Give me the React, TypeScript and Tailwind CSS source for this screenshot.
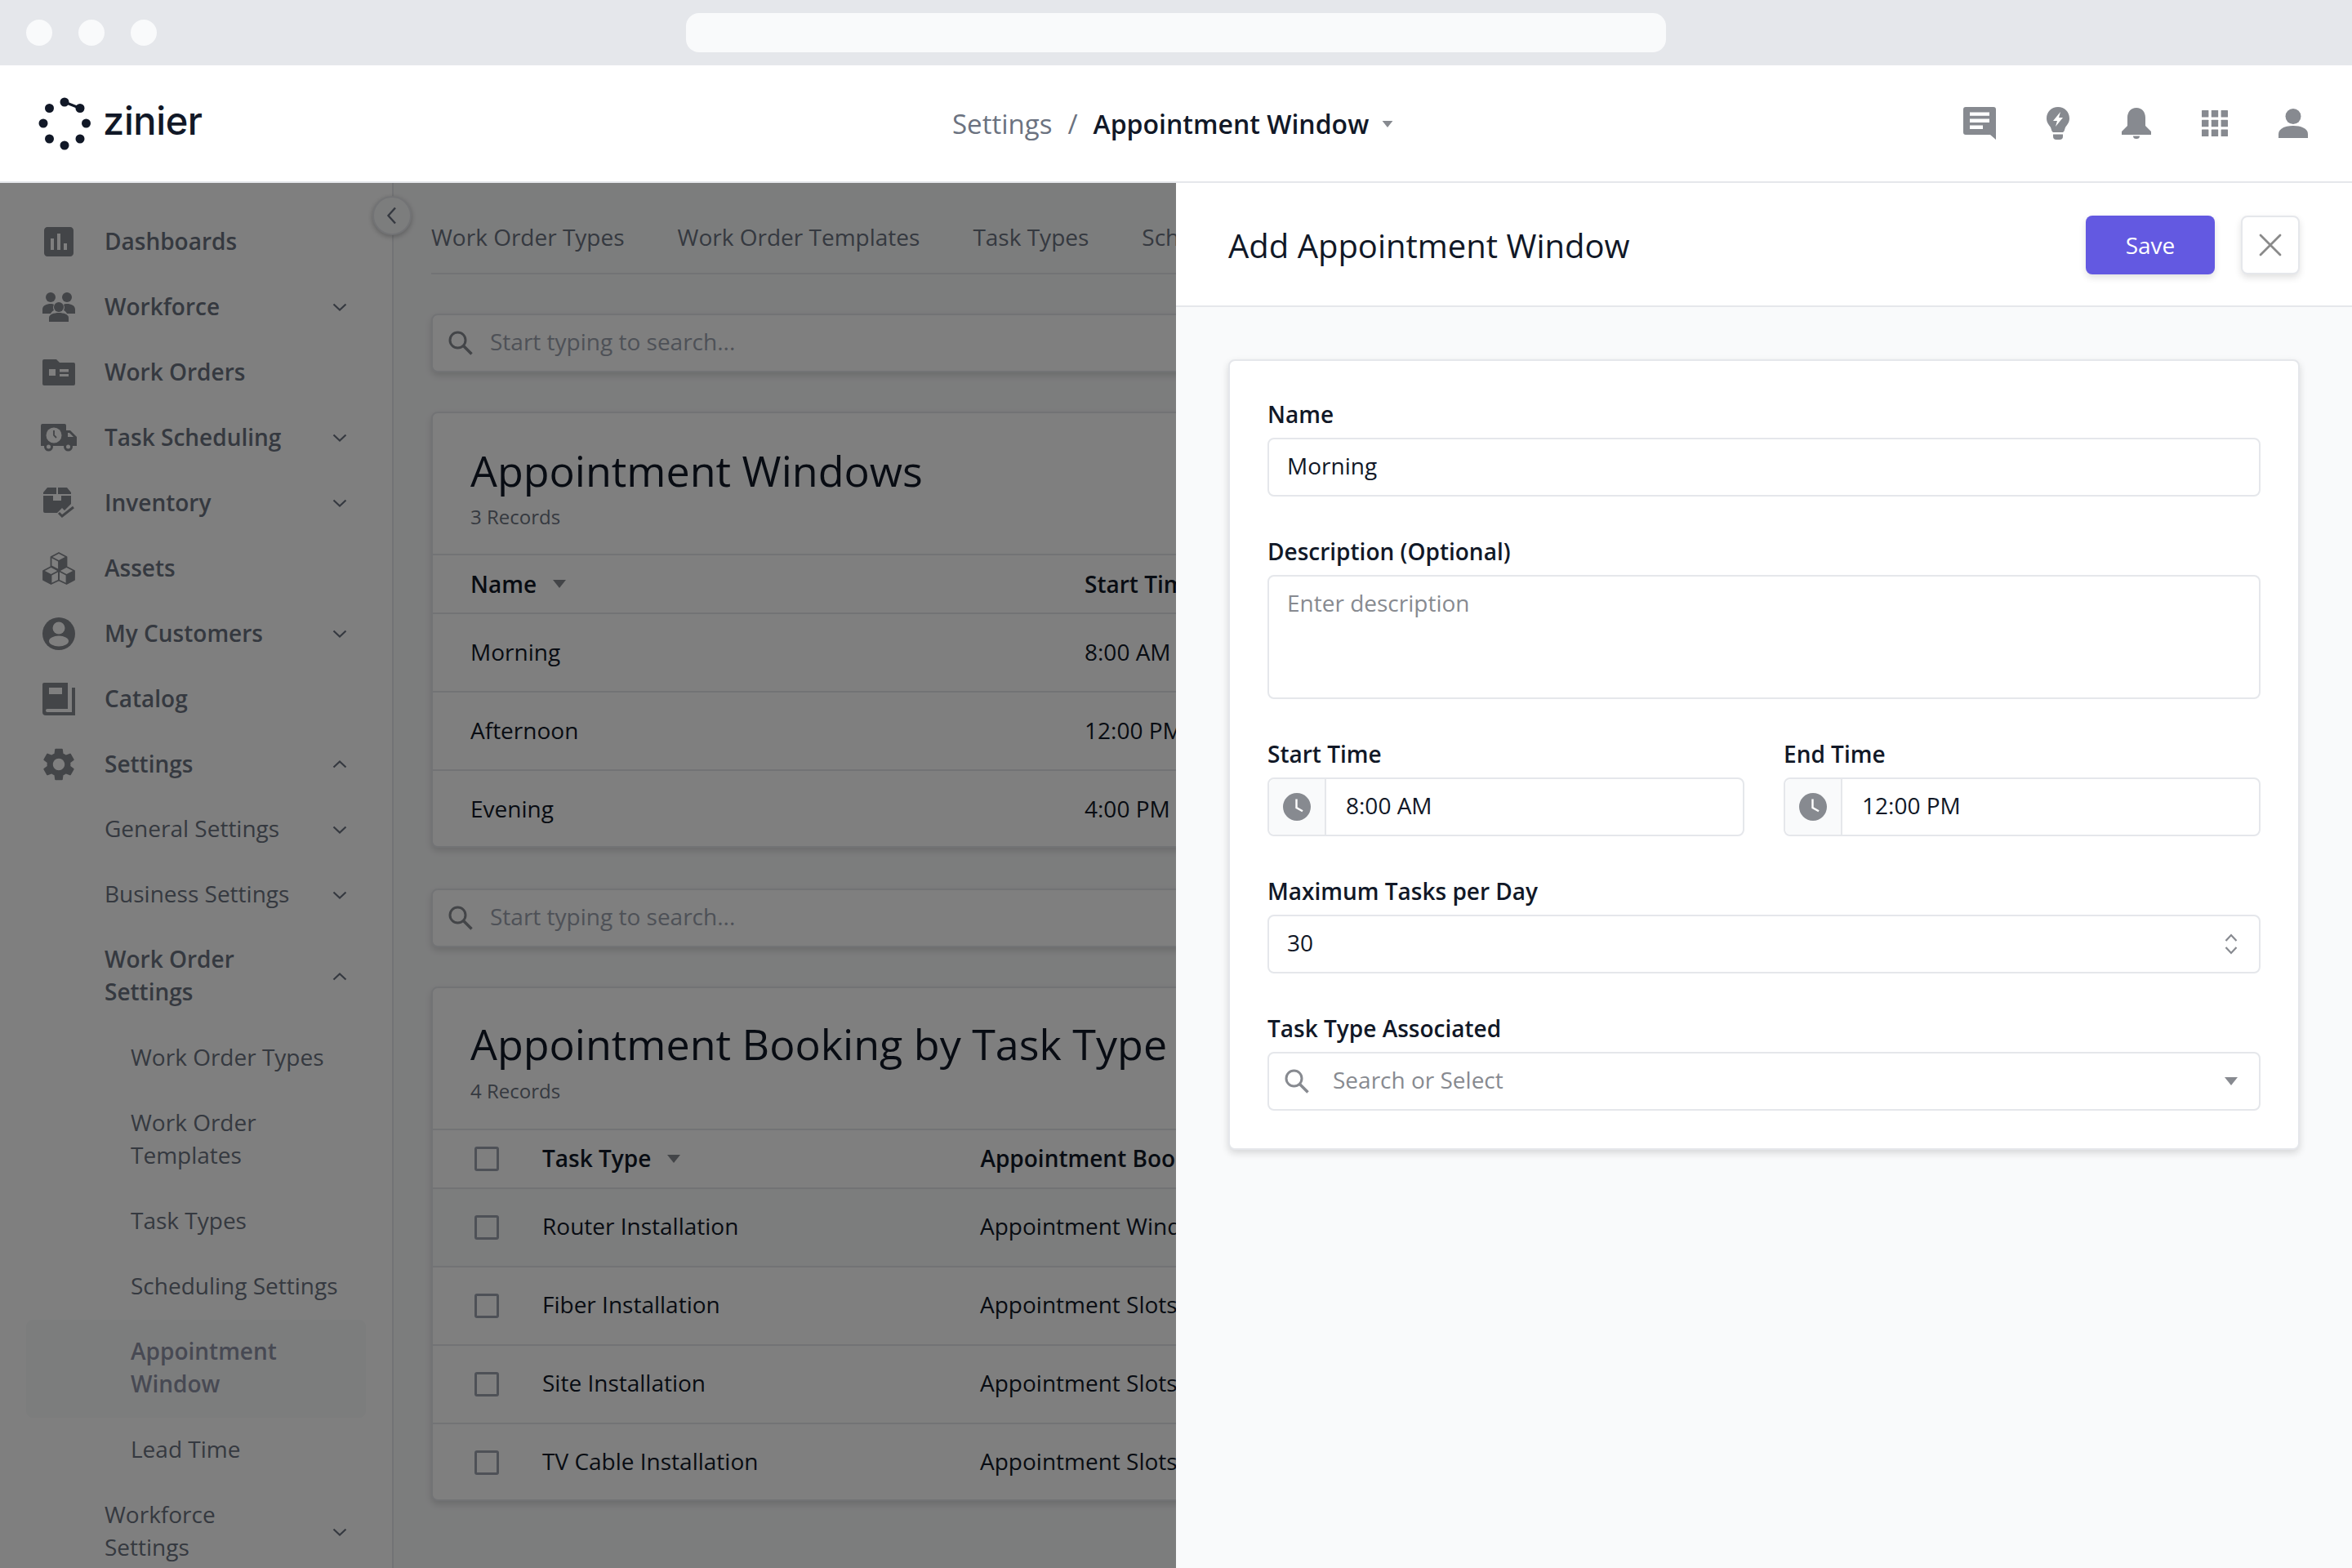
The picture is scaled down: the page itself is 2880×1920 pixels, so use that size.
import React from "react";
import { MdInsertChart, MdSettings } from "react-icons/md";

const Chevron = ({ up }: { up?: boolean }) => (
  <svg width="24" height="24" viewBox="0 0 24 24" fill="none" className="shrink-0">
    <path d={up ? "M4.500 15.500 12 8.500l7.500 7" : "M4.500 8.500 12 15.500l7.500-7"} stroke="#6b7280" strokeWidth="2.200" />
  </svg>
);

const Caret = ({ small }: { small?: boolean }) => (
  <svg width={small ? 14 : 16} height={small ? 8 : 10} viewBox="0 0 16 10" className="shrink-0">
    <path d="M0 0h16L8 10z" fill="#878a90" />
  </svg>
);

const SearchIcon = () => (
  <svg width="32" height="32" viewBox="0 0 32 32" fill="none" className="shrink-0">
    <circle cx="12.500" cy="12.500" r="9.500" stroke="#878a90" strokeWidth="3" />
    <path d="m19.500 19.500 10 10" stroke="#878a90" strokeWidth="3.600" />
  </svg>
);

const Groups = () => (
  <svg width="40" height="36" viewBox="0 0 40 36">
    <g fill="#878a90">
      <circle cx="10" cy="6" r="6" />
      <circle cx="30" cy="6" r="6" />
      <path d="M0 26v-5c0-5 5-7 10-7 2 0 3 .4 4 1-1.500 3-1 5 0 7-2 1-3 2-4 4z" />
      <path d="M40 26v-5c0-5-5-7-10-7-2 0-3 .4-4 1 1.500 3 1 5 0 7 2 1 3 2 4 4z" />
      <circle cx="20" cy="18" r="6" />
      <path d="M8 36v-5c0-4 6-6 12-6s12 2 12 6v5z" />
    </g>
  </svg>
);

const Folder = () => (
  <svg width="40" height="32" viewBox="0 0 40 32">
    <path d="M2 0h15l4 4h17a2 2 0 0 1 2 2v24a2 2 0 0 1-2 2H2a2 2 0 0 1-2-2V2a2 2 0 0 1 2-2z" fill="#878a90" />
    <path d="M8 12h8v8H8zM21 12h11v3.500H21zM21 18h11v3H21z" fill="#fff" />
  </svg>
);

const Truck = () => (
  <svg width="44" height="34" viewBox="0 0 44 34">
    <path d="M2 0h27a2 2 0 0 1 2 2v6h5l8 8v11H0V2a2 2 0 0 1 2-2z" fill="#878a90" />
    <path d="M33 11h2l5 5h-7z" fill="#fff" />
    <circle cx="16" cy="14" r="9.500" fill="#fff" />
    <path d="M16 8v6l3 3" fill="none" stroke="#878a90" strokeWidth="1.800" />
    <circle cx="9.500" cy="28" r="5.500" fill="#878a90" />
    <circle cx="9.500" cy="28" r="2.500" fill="#fff" />
    <circle cx="33.500" cy="28" r="5.500" fill="#878a90" />
    <circle cx="33.500" cy="28" r="2.500" fill="#fff" />
  </svg>
);

const Inventory = () => (
  <svg width="38" height="38" viewBox="0 0 38 38">
    <path d="M5 0h11v8H0V6zM18 0h11l5 6v2H18zM0 10h12v6h10v-6h12v10l-8 8-3-3-6 6H2a2 2 0 0 1-2-2z" fill="#878a90" />
    <path d="m19 31 4 4 14-11" fill="none" stroke="#878a90" strokeWidth="3" />
  </svg>
);

const Cubes = () => (
  <svg width="40" height="40" viewBox="0 0 40 40" fill="none" stroke="#878a90" strokeWidth="1.800" strokeLinejoin="round">
    <path d="M20 1l9.500 5v11L20 22l-9.500-5V6z" />
    <path d="M10.500 6 20 11l9.500-5M20 11v11" />
    <path d="M10.500 18 20 23v11.500L10.500 39 1 34V23z" />
    <path d="M1 23l9.500 5L20 23M10.500 28v11" />
    <path d="M29.500 18 39 23v11l-9.500 5L20 34.500V23z" />
    <path d="M20 23l9.500 5L39 23M29.500 28v11" />
    <path d="M20 11v11l9.500-5V6zM10.500 28v11L1 34V23zM29.500 28v11l9.500-5V23z" fill="#878a90" stroke="none" />
  </svg>
);

const Customer = () => (
  <svg width="40" height="40" viewBox="0 0 40 40">
    <circle cx="20" cy="20" r="20" fill="#878a90" />
    <circle cx="20" cy="13" r="7.500" fill="#fff" />
    <ellipse cx="20" cy="29" rx="12" ry="6.500" fill="#fff" />
  </svg>
);

const Book = () => (
  <svg width="40" height="40" viewBox="0 0 40 40">
    <path d="M2 0h29v32H6a2 2 0 0 0-2 2 2 2 0 0 0 2 2h30V6h4v34H4a4 4 0 0 1-4-4V2a2 2 0 0 1 2-2z" fill="#878a90" />
    <path d="M8 6h16v8H8z" fill="#fff" />
  </svg>
);

const Bulb = () => (
  <svg width="28" height="40" viewBox="0 0 28 40">
    <path d="M14 0c8 0 14 6 14 14 0 5-3 8-5 11-1 2-1 5-3 6H8c-2-1-2-4-3-6C3 22 0 19 0 14 0 6 6 0 14 0z" fill="#878a90" />
    <path d="M8 33.500h12V36a4 4 0 0 1-4 4h-4a4 4 0 0 1-4-4z" fill="#878a90" />
    <path d="M17 6 8 17h5l-2 7 9-11h-5z" fill="#fff" />
  </svg>
);

const Comment = () => (
  <svg width="40" height="40" viewBox="0 0 40 40">
    <path d="M3 0h34a3 3 0 0 1 3 3v37l-7-6H3a3 3 0 0 1-3-3V3a3 3 0 0 1 3-3z" fill="#878a90" />
    <path d="M8 6.500h24v4.300H8zM8 14.500h24v4.500H8zM8 22.500h16v4.500H8z" fill="#fff" />
  </svg>
);

const Bell = () => (
  <svg width="36" height="38" viewBox="0 0 36 38">
    <path d="M18 0c7 0 11 5.500 11 12v10l7 7v4H0v-4l7-7V12C7 5.500 11 0 18 0z" fill="#878a90" />
    <path d="M14 34.500h8a4 3.500 0 0 1-8 0z" fill="#878a90" />
  </svg>
);

const Apps = () => (
  <svg width="32" height="32" viewBox="0 0 32 32" fill="#878a90">
    {[0, 11.8, 23.6].map((y) =>
      [0, 11.8, 23.6].map((x) => <rect key={`${x}-${y}`} x={x} y={y} width="8.400" height="8.400" rx="0.500" />)
    )}
  </svg>
);

const Person = () => (
  <svg width="36" height="36" viewBox="0 0 36 36" fill="#878a90">
    <circle cx="18" cy="9.500" r="9.500" />
    <path d="M0 36v-5c0-7 9-10 18-10s18 3 18 10v5z" />
  </svg>
);

const Clock = () => (
  <svg width="34" height="34" viewBox="0 0 34 34">
    <circle cx="17" cy="17" r="17" fill="#878a90" />
    <path d="M16.500 7.500v10.500l7.500 4.200" fill="none" stroke="#fff" strokeWidth="2.400" />
  </svg>
);

const Logo = () => (
  <div className="flex items-center">
    <svg width="66" height="66" viewBox="0 0 66 66" className="shrink-0">
      <g fill="#111827">
        <circle cx="7" cy="33" r="5.500" />
        <circle cx="14.500" cy="14.500" r="5.500" />
        <circle cx="33" cy="7" r="5.500" />
        <circle cx="52" cy="14.500" r="5.500" />
        <circle cx="59.500" cy="33" r="5.500" />
        <circle cx="52" cy="52" r="5.500" />
        <circle cx="33" cy="60" r="5.500" />
        <circle cx="14.500" cy="52" r="5.500" />
      </g>
      <path d="M33 7 52 14.500" stroke="#111827" strokeWidth="3" />
    </svg>
    <span className="ml-[14px] text-[47px] leading-[66px] text-[#111827] font-['Inter',sans-serif] font-medium tracking-[-0.4px] -translate-y-[3px]">zinier</span>
  </div>
);

type Item = { label: string; icon?: React.ReactNode; level: 0 | 1 | 2; chev?: "up" | "down"; active?: boolean; lines?: [string, string] };

const items: Item[] = [
  { label: "Dashboards", icon: <MdInsertChart size={48} color="#878a90" />, level: 0 },
  { label: "Workforce", icon: <Groups />, level: 0, chev: "down" },
  { label: "Work Orders", icon: <Folder />, level: 0 },
  { label: "Task Scheduling", icon: <Truck />, level: 0, chev: "down" },
  { label: "Inventory", icon: <Inventory />, level: 0, chev: "down" },
  { label: "Assets", icon: <Cubes />, level: 0 },
  { label: "My Customers", icon: <Customer />, level: 0, chev: "down" },
  { label: "Catalog", icon: <Book />, level: 0 },
  { label: "Settings", icon: <MdSettings size={48} color="#878a90" />, level: 0, chev: "up" },
  { label: "General Settings", level: 1, chev: "down" },
  { label: "Business Settings", level: 1, chev: "down" },
  { label: "Work Order Settings", level: 1, chev: "up" },
  { label: "Work Order Types", level: 2 },
  { label: "Work Order Templates", level: 2, lines: ["Work Order", "Templates"] },
  { label: "Task Types", level: 2 },
  { label: "Scheduling Settings", level: 2 },
  { label: "Appointment Window", level: 2, active: true, lines: ["Appointment", "Window"] },
  { label: "Lead Time", level: 2 },
  { label: "Workforce Settings", level: 1, chev: "down" },
];

const NavRow = ({ item }: { item: Item }) => (
  <div className={`ml-8 w-[416px] flex items-center py-5 rounded-lg ${item.active ? "bg-[#f9fafb]" : ""}`}>
    {item.level === 0 && (
      <>
        <div className="w-[80px] h-10 flex items-center justify-center shrink-0">{item.icon}</div>
        <span className="ml-4 text-[28px] leading-10 font-semibold text-[#6b7280] whitespace-nowrap -translate-y-[1px]">{item.label}</span>
      </>
    )}
    {item.level === 1 && (
      <span className={`ml-[96px] w-[240px] text-[28px] leading-10 text-[#6b7280] -translate-y-[2px] ${item.chev === "up" ? "font-semibold" : ""}`}>{item.label}</span>
    )}
    {item.level === 2 && (
      <span className={`ml-[128px] w-[270px] text-[28px] leading-10 -translate-y-[2px] ${item.active ? "font-semibold text-[#8f93a6]" : "text-[#6b7280]"}`}>
        {item.lines ? (
          <>
            {item.lines[0]}
            <br />
            {item.lines[1]}
          </>
        ) : (
          item.label
        )}
      </span>
    )}
    {item.chev && (
      <div className="ml-auto mr-5">
        <Chevron up={item.chev === "up"} />
      </div>
    )}
  </div>
);

const SearchBar = () => (
  <div className="w-[1800px] h-[72px] bg-white border-2 border-[#e5e7eb] rounded-lg shadow-[0_4px_8px_rgba(0,0,0,0.14)] flex items-center pl-[18px]">
    <SearchIcon />
    <span className="ml-[20px] text-[28px] text-[#9ca3af] -translate-y-[2px]">Start typing to search...</span>
  </div>
);

const TableRow = ({ cells }: { cells: string[] }) => (
  <div className="h-[96px] border-t-2 border-[#e5e7eb] flex items-center text-[28px] text-[#111827]">
    <span className="ml-[46px] w-[752px] -translate-y-[1px]">{cells[0]}</span>
    <span className="-translate-y-[1px]">{cells[1]}</span>
  </div>
);

const Check = () => <span className="ml-[51px] w-[30px] h-[30px] border-[3px] border-[#9ca3af] rounded-[3px] shrink-0" />;

const CheckRow = ({ a, b, tint }: { a: string; b: string; tint?: boolean }) => (
  <div className={`h-[96px] border-t-2 border-[#e5e7eb] flex items-center text-[28px] text-[#111827] ${tint ? "bg-[#f9fafb]" : ""}`}>
    <Check />
    <span className="ml-[53px] w-[536px] -translate-y-[2px]">{a}</span>
    <span className="-translate-y-[2px]">{b}</span>
  </div>
);

const Label = ({ children }: { children: React.ReactNode }) => (
  <div className="h-10 mb-2 text-[28px] leading-[38px] font-semibold text-[#111827]">{children}</div>
);

const Field = ({ children, className = "" }: { children: React.ReactNode; className?: string }) => (
  <div className={`h-[72px] border-2 border-[#e5e7eb] rounded-lg bg-white flex items-center text-[28px] text-[#111827] ${className}`}>{children}</div>
);

const TimeField = ({ label, value }: { label: string; value: string }) => (
  <div className="w-[584px]">
    <Label>{label}</Label>
    <Field>
      <div className="w-[70px] h-full bg-[#f9fafb] border-r-2 border-[#e5e7eb] rounded-l-lg flex items-center justify-center shrink-0">
        <Clock />
      </div>
      <span className="ml-6 -translate-y-[2px]">{value}</span>
    </Field>
  </div>
);

export default function App() {
  return (
    <div className="w-[2880px] h-[1920px] overflow-hidden flex flex-col bg-white font-['Open_Sans',sans-serif]">
      <div className="h-[80px] bg-[#e5e7eb] flex items-center shrink-0 relative">
        <div className="ml-8 flex gap-8">
          <div className="w-8 h-8 rounded-full bg-[#f9fafb]" />
          <div className="w-8 h-8 rounded-full bg-[#f9fafb]" />
          <div className="w-8 h-8 rounded-full bg-[#f9fafb]" />
        </div>
        <div className="ml-[648px] w-[1200px] h-12 rounded-2xl bg-[#f9fafb]" />
      </div>

      <div className="h-[144px] border-b-2 border-[#e5e7eb] bg-white flex items-center shrink-0 pl-[46px] pr-[54px]">
        <div className="w-[1120px] shrink-0">
          <Logo />
        </div>
        <div className="flex items-center mt-[2px]">
          <span className="text-[33px] text-[#6b7280]">Settings</span>
          <span className="text-[33px] text-[#6b7280] mx-[19px]">/</span>
          <span className="text-[32px] font-semibold text-[#111827]">Appointment Window</span>
          <span className="ml-4">
            <Caret small />
          </span>
        </div>
        <div className="ml-auto flex items-center">
          <Comment />
          <div className="ml-[62px]">
            <Bulb />
          </div>
          <div className="ml-[64px]">
            <Bell />
          </div>
          <div className="ml-[62px]">
            <Apps />
          </div>
          <div className="ml-[62px]">
            <Person />
          </div>
        </div>
      </div>

      <div className="flex-1 min-h-0 flex">
        <div className="w-[1440px] shrink-0 relative flex overflow-hidden">
          <aside className="w-[482px] shrink-0 bg-white border-r-2 border-[#e5e7eb] pt-8 relative">
            {items.map((it) => (
              <NavRow key={it.label} item={it} />
            ))}
            <div className="absolute left-[456px] top-4 w-12 h-12 rounded-full bg-[#f9fafb] border-2 border-[#e5e7eb] shadow-[0_2px_6px_rgba(0,0,0,0.25)] flex items-center justify-center">
              <svg width="14" height="22" viewBox="0 0 14 22" fill="none">
                <path d="M11 1.500 2.500 11l8.500 9.500" stroke="#6b7280" strokeWidth="2.400" />
              </svg>
            </div>
          </aside>

          <main className="flex-1 min-w-0 bg-[#f9fafb] pl-[46px] overflow-hidden">
            <div className="w-[1800px]">
              <div className="h-[112px] border-b-2 border-[#e5e7eb] flex items-center gap-[65px] text-[28px] text-[#6b7280] whitespace-nowrap pt-[22px]">
                <span>Work Order Types</span>
                <span>Work Order Templates</span>
                <span>Task Types</span>
                <span>Scheduling Settings</span>
              </div>
              <div className="mt-[48px]">
                <SearchBar />
              </div>
              <section className="mt-[48px] w-[1800px] h-[534px] bg-white border-2 border-[#e5e7eb] rounded-lg shadow-[0_4px_8px_rgba(0,0,0,0.14)] overflow-hidden">
                <div className="h-[172px] pl-[46px] pt-[34px]">
                  <h2 className="text-[52px] leading-[72px] text-[#111827]">Appointment Windows</h2>
                  <p className="mt-[5px] text-[24px] leading-8 text-[#6b7280]">3 Records</p>
                </div>
                <div className="h-[72px] border-t-2 border-[#e5e7eb] flex items-center text-[28px] font-semibold text-[#111827]">
                  <span className="ml-[46px]">Name</span>
                  <span className="ml-5">
                    <Caret />
                  </span>
                  <span className="ml-[635px]">Start Time</span>
                </div>
                <TableRow cells={["Morning", "8:00 AM"]} />
                <TableRow cells={["Afternoon", "12:00 PM"]} />
                <TableRow cells={["Evening", "4:00 PM"]} />
              </section>
              <div className="mt-[50px]">
                <SearchBar />
              </div>
              <section className="mt-[48px] w-[1800px] h-[630px] bg-white border-2 border-[#e5e7eb] rounded-lg shadow-[0_4px_8px_rgba(0,0,0,0.14)] overflow-hidden">
                <div className="h-[172px] pl-[46px] pt-[32px]">
                  <h2 className="text-[52px] leading-[72px] text-[#111827]">Appointment Booking by Task Type</h2>
                  <p className="mt-[6px] text-[24px] leading-8 text-[#6b7280]">4 Records</p>
                </div>
                <div className="h-[72px] border-t-2 border-[#e5e7eb] flex items-center text-[28px] font-semibold text-[#111827]">
                  <Check />
                  <span className="ml-[53px] -translate-y-[1px]">Task Type</span>
                  <span className="ml-5">
                    <Caret />
                  </span>
                  <span className="ml-[367px] -translate-y-[1px]">Appointment Booking</span>
                </div>
                <CheckRow a="Router Installation" b="Appointment Window" tint />
                <CheckRow a="Fiber Installation" b="Appointment Slots" />
                <CheckRow a="Site Installation" b="Appointment Slots" />
                <CheckRow a="TV Cable Installation" b="Appointment Slots" />
              </section>
            </div>
          </main>

          <div className="absolute inset-0 bg-black/50 z-10" />
        </div>

        <div className="w-[1440px] shrink-0 bg-[#f9fafb] flex flex-col">
          <div className="h-[152px] border-b-2 border-[#e5e7eb] bg-white flex items-center pl-[64px] pr-[64px] shrink-0">
            <h1 className="text-[40px] leading-[56px] text-[#111827] mt-[4px]">Add Appointment Window</h1>
            <button className="ml-auto w-[158px] h-[72px] rounded-lg bg-[#6359e1] text-white text-[28px] shadow-[0_4px_8px_rgba(0,0,0,0.12)] mt-[2px]">Save</button>
            <button className="ml-8 w-[72px] h-[72px] rounded-lg bg-white border-2 border-[#e5e7eb] shadow-[0_4px_8px_rgba(0,0,0,0.12)] flex items-center justify-center mt-[2px]">
              <svg width="28" height="28" viewBox="0 0 28 28" fill="none">
                <path d="m2 2 24 24M26 2 2 26" stroke="#8a8a8a" strokeWidth="2.800" strokeLinecap="round" />
              </svg>
            </button>
          </div>

          <div className="p-[64px]">
            <div className="bg-white border-2 border-[#e5e7eb] rounded-lg shadow-[0_4px_10px_rgba(0,0,0,0.14)] p-[46px] flex flex-col gap-[48px]">
              <div>
                <Label>Name</Label>
                <Field className="pl-[22px]">
                  <span className="-translate-y-[2px]">Morning</span>
                </Field>
              </div>
              <div>
                <Label>Description (Optional)</Label>
                <div className="h-[152px] border-2 border-[#e5e7eb] rounded-lg pl-[22px] pt-[12px] text-[28px] leading-10 text-[#878a90]">Enter description</div>
              </div>
              <div className="flex gap-[48px]">
                <TimeField label="Start Time" value="8:00 AM" />
                <TimeField label="End Time" value="12:00 PM" />
              </div>
              <div>
                <Label>Maximum Tasks per Day</Label>
                <Field className="pl-[22px] pr-[26px] justify-between">
                  <span className="-translate-y-[2px]">30</span>
                  <svg width="16" height="26" viewBox="0 0 16 26" fill="none">
                    <path d="m1.500 9 6.500-7 6.500 7M1.500 17l6.500 7 6.500-7" stroke="#878a90" strokeWidth="2.200" />
                  </svg>
                </Field>
              </div>
              <div>
                <Label>Task Type Associated</Label>
                <Field className="pl-[18px] pr-[26px]">
                  <SearchIcon />
                  <span className="ml-[28px] text-[#878a90] -translate-y-[2px]">Search or Select</span>
                  <span className="ml-auto">
                    <Caret />
                  </span>
                </Field>
              </div>
            </div>
          </div>
        </div>
      </div>
    </div>
  );
}
